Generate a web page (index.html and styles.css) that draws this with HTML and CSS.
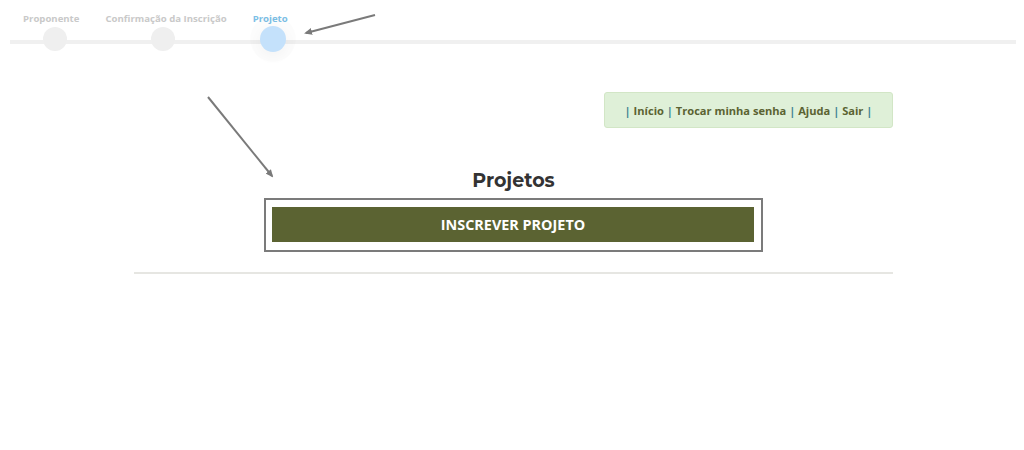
FILE: index.html
```html
<!DOCTYPE html>
<html lang="pt-BR">
<head>
<meta charset="utf-8">
<title>Projetos</title>
<link rel="stylesheet" href="styles.css">
</head>
<body>
<div class="steps">
  <div class="step step-1"><span class="step-label">Proponente</span><span class="dot"></span></div>
  <div class="step step-2"><span class="step-label">Confirmação da Inscrição</span><span class="dot"></span></div>
  <div class="step step-3 active"><span class="step-label">Projeto</span><span class="dot"></span></div>
</div>

<svg class="annotations" width="1024" height="450" viewBox="0 0 1024 450">
  <defs>
    <marker id="head" markerWidth="8" markerHeight="8" refX="6" refY="4" orient="auto" markerUnits="userSpaceOnUse">
      <path d="M0,0.5 L8,4 L0,7.5 Z" fill="#7a7a7a"/>
    </marker>
  </defs>
  <line x1="375" y1="15" x2="306" y2="33" stroke="#7a7a7a" stroke-width="2" marker-end="url(#head)"/>
  <line x1="208" y1="97" x2="272" y2="176" stroke="#7a7a7a" stroke-width="2" marker-end="url(#head)"/>
</svg>

<main class="container">
  <div class="topbar">
    <nav class="menu">
      <span class="sep">|</span>&nbsp;<a href="#">Início</a>&nbsp;<span class="sep">|</span>&nbsp;<a href="#">Trocar minha senha</a>&nbsp;<span class="sep">|</span>&nbsp;<a href="#">Ajuda</a>&nbsp;<span class="sep">|</span>&nbsp;<a href="#">Sair</a>&nbsp;<span class="sep">|</span>
    </nav>
  </div>
  <h2 class="title">Projetos</h2>
  <div class="btn-frame">
    <button class="btn-main">INSCREVER PROJETO</button>
  </div>
  <hr class="divider">
</main>
</body>
</html>
```

FILE: styles.css
```css
* { box-sizing: border-box; }
html, body { margin: 0; padding: 0; background: #fff; }
body {
  font-family: "Open Sans", "Liberation Sans", sans-serif;
  width: 1024px;
  height: 450px;
  overflow: hidden;
  position: relative;
}

.steps {
  position: relative;
  display: flex;
  gap: 26px;
  padding: 11px 0 0 23px;
  height: 60px;
}
.steps::before {
  content: "";
  position: absolute;
  left: 10px;
  right: 8px;
  top: 40px;
  height: 4px;
  background: #f0f0f0;
}
.step {
  position: relative;
  display: flex;
  flex-direction: column;
  align-items: center;
}
.step-label {
  font-size: 9.6px;
  font-weight: 700;
  line-height: 15px;
  color: #c9c9c9;
  white-space: nowrap;
}
.dot {
  margin-top: 1px;
  width: 24px;
  height: 24px;
  border-radius: 50%;
  background: #efefef;
}
.step-1 .dot { margin-left: 7px; }
.step-2 .dot { margin-right: 6px; }
.step-3 .dot { margin-left: 6px; }
.step.active .step-label { color: #7cc0e6; }
.step.active .dot {
  width: 26px;
  height: 26px;
  margin-top: 0;
  background: #c4e1fb;
  box-shadow: 0 0 0 10px rgba(0, 0, 0, 0.012), 0 4px 14px rgba(0, 0, 0, 0.04);
}

.annotations {
  position: absolute;
  left: 0;
  top: 0;
  pointer-events: none;
}

.container {
  width: 759px;
  margin: 32px 0 0 134px;
  display: flex;
  flex-direction: column;
  align-items: center;
}
.topbar {
  align-self: stretch;
  display: flex;
  justify-content: flex-end;
}
.menu {
  background: #dff0d8;
  border: 1px solid #d2e6c6;
  border-radius: 3px;
  width: 289px;
  height: 36px;
  display: flex;
  align-items: center;
  justify-content: center;
  font-size: 11.1px;
  font-weight: 700;
  white-space: nowrap;
}
.menu a { color: #5b6332; text-decoration: none; }
.menu .sep { color: #3d8391; }

.title {
  font-family: "Montserrat", "Inter", "Open Sans", sans-serif;
  font-size: 19px;
  font-weight: 700;
  color: #333;
  margin: 41px 0 0;
  line-height: 24px;
}
.btn-frame {
  margin-top: 5px;
  width: 499px;
  border: 2px solid #7b7b7b;
  padding: 7px 7px 8px 6px;
  background: #fff;
}
.btn-main {
  display: block;
  width: 100%;
  height: 35px;
  border: 0;
  background: #5b6332;
  color: #fff;
  font-family: "Open Sans", "Liberation Sans", sans-serif;
  font-size: 14.4px;
  font-weight: 700;
  cursor: pointer;
}
.divider {
  align-self: stretch;
  border: 0;
  height: 2px;
  background: #e6e6e2;
  margin: 20px 0 0;
}
```
